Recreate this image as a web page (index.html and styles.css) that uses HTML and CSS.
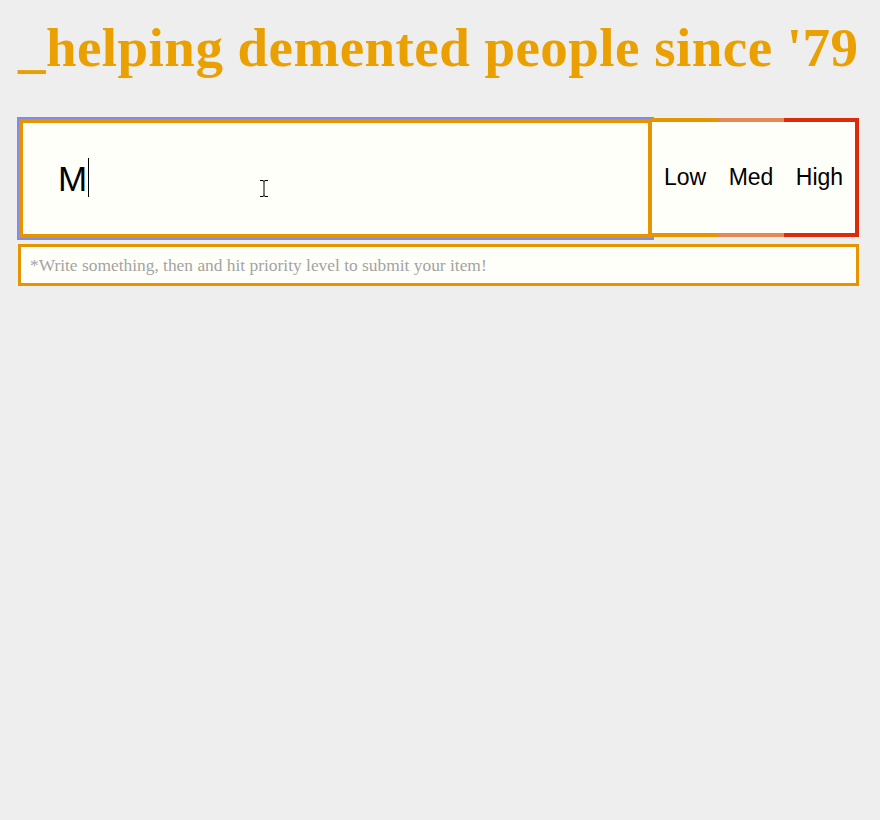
FILE: index.html
```html
<!DOCTYPE html>
<html lang="en">
<head>
<meta charset="utf-8">
<title>Todo</title>
<link rel="stylesheet" href="styles.css">
</head>
<body>
<h1 class="title">_helping demented people since '79</h1>
<form class="composer" onsubmit="return false">
  <div class="composer-row">
    <input class="entry" type="text" value="M" autofocus>
    <button class="prio prio-low" type="button">Low</button>
    <button class="prio prio-med" type="button">Med</button>
    <button class="prio prio-high" type="button">High</button>
    <span class="caret" aria-hidden="true"></span>
    <svg class="pointer" width="10" height="17" viewBox="0 0 10 17" aria-hidden="true">
      <path d="M1 0.5h3M6 0.5h3M5 1v15M1 16.5h3M6 16.5h3M4 1h2M4 16h2" stroke="#000" stroke-width="1" fill="none"/>
    </svg>
  </div>
  <p class="hint">*Write something, then and hit priority level to submit your item!</p>
</form>
</body>
</html>
```

FILE: styles.css
```css
body {
  margin: 0;
  background: #eeeeee;
  font-family: "Liberation Serif", "Times New Roman", serif;
}

.title {
  margin: 0;
  padding: 15px 0 0 18px;
  height: 103px;
  box-sizing: border-box;
  font-size: 55px;
  letter-spacing: 0.45px;
  line-height: 66px;
  font-weight: bold;
  color: #e9a000;
  white-space: nowrap;
}

.composer {
  margin: 0 21px 0 18px;
}

.composer-row {
  position: relative;
  display: flex;
  align-items: flex-start;
  height: 120px;
  margin-top: 15px;
  padding-left: 1px;
}

.entry {
  flex: 1;
  min-width: 0;
  height: 119px;
  box-sizing: border-box;
  margin: 1px 0 0 0;
  border: 4px solid #e69500;
  background: #fffff9;
  font-family: "Liberation Sans", Arial, sans-serif;
  font-size: 35px;
  padding: 0 35px;
  color: #000;
  caret-color: transparent;
  outline: 2px solid #7f8ce8;
  outline-offset: 0;
}

.entry:focus {
  outline: 2px solid #7f8ce8;
}

.prio {
  flex: 0 0 66px;
  margin: 0;
  padding: 0;
  height: 119px;
  box-sizing: border-box;
  border: 4px solid transparent;
  border-left: 0;
  border-right: 0;
  background: #fffff9;
  font-family: "Liberation Sans", Arial, sans-serif;
  font-size: 23px;
  text-align: center;
  color: #000;
  cursor: pointer;
}

.prio-low {
  border-color: #e69500;
}

.prio-med {
  border-color: #e58856;
}

.prio-high {
  flex-basis: 75px;
  border-color: #dd2a0a;
  border-right: 4px solid #dd2a0a;
}

.caret {
  position: absolute;
  left: 70px;
  top: 40px;
  width: 1px;
  height: 39px;
  background: #000;
}

.pointer {
  position: absolute;
  left: 241px;
  top: 62px;
}

.hint {
  margin: 6px 0 0 0;
  padding: 8px 9px;
  border: 3px solid #e69500;
  background: #fffff9;
  font-size: 17.4px;
  line-height: 20px;
  color: #a3a3a3;
}
```
